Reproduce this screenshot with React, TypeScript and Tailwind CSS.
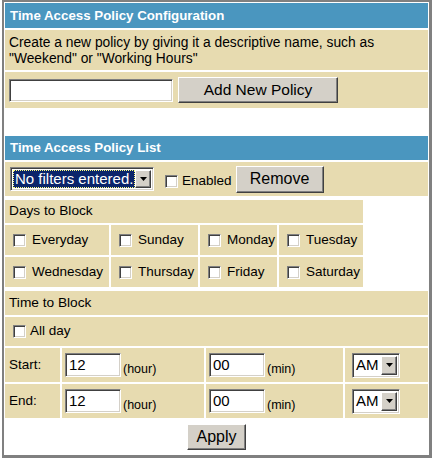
import * as React from "react";

const inset =
  "border border-t-[#808080] border-l-[#808080] border-r-white border-b-white shadow-[inset_1px_1px_0_#404040,inset_-1px_-1px_0_#d4d0c8]";
const raised =
  "border border-t-white border-l-white border-r-[#404040] border-b-[#404040] shadow-[inset_-1px_-1px_0_#808080] bg-[#d4d0c8]";

function Checkbox() {
  return <span className={`inline-block h-[13px] w-[13px] shrink-0 bg-white ${inset}`} />;
}

function Arrow() {
  return (
    <span className={`flex h-full w-[16px] shrink-0 items-center justify-center ${raised}`}>
      <svg width="7" height="4" viewBox="0 0 7 4">
        <path d="M0 0h7L3.5 4z" fill="#000" />
      </svg>
    </span>
  );
}

function DayCell({ label }: { label: string }) {
  return (
    <div className="flex items-center gap-[6px] bg-[#e7dbb0] pl-[8px] text-[13.5px]">
      <Checkbox />
      <span>{label}</span>
    </div>
  );
}

function TimeRow({ label }: { label: string }) {
  return (
    <div className="mt-[2px] grid h-[34px] grid-cols-[55px_142px_137px_1fr] gap-x-[2px]">
      <div className="flex items-center bg-[#e7dbb0] pl-[4px] text-[13.5px]">{label}</div>
      <div className="flex items-center bg-[#e7dbb0] pl-[3px]">
        <span className={`flex h-[24px] w-[56px] items-center bg-white pl-[3px] text-[15px] ${inset}`}>12</span>
        <span className="ml-[2px] mt-[8px] text-[12.5px]">(hour)</span>
      </div>
      <div className="flex items-center bg-[#e7dbb0] pl-[3px]">
        <span className={`flex h-[24px] w-[56px] items-center bg-white pl-[3px] text-[15px] ${inset}`}>00</span>
        <span className="ml-[2px] mt-[8px] text-[12.5px]">(min)</span>
      </div>
      <div className="flex items-center bg-[#e7dbb0] pl-[7px]">
        <span className={`flex h-[25px] w-[48px] items-center justify-between bg-white py-[2px] pl-[3px] pr-[2px] text-[15px] ${inset}`}>
          AM
          <Arrow />
        </span>
      </div>
    </div>
  );
}

export default function App() {
  return (
    <div className="h-[458px] w-[432px] bg-white pl-[2px] font-['Liberation_Sans',Arial,sans-serif] text-[14px] text-black">
      <div className="h-[458px] w-[430px] border-b-[3px] border-l-2 border-r-[3px] border-t-2 border-[#808080] px-px pt-px">
        {/* Configuration */}
        <div className="flex h-[25px] items-center bg-[#4a96bf] pl-[5px] text-[13.3px] font-bold text-white">
          Time Access Policy Configuration
        </div>
        <div className="mt-[2px] h-[40px] bg-[#e7dbb0] px-[4px] pt-[5px] text-[13.8px] leading-[16px]">
          Create a new policy by giving it a descriptive name, such as
          <br />
          "Weekend" or "Working Hours"
        </div>
        <div className="mt-[2px] flex h-[36px] items-center gap-[5px] bg-[#e7dbb0] pl-[4px]">
          <span className={`h-[23px] w-[164px] bg-white ${inset}`} />
          <button className={`h-[26px] w-[160px] text-[15.5px] ${raised}`}>Add New Policy</button>
        </div>

        {/* List */}
        <div className="mt-[28px] flex h-[24px] items-center bg-[#4a96bf] pl-[5px] text-[13.3px] font-bold text-white">
          Time Access Policy List
        </div>
        <div className="mt-[2px] flex h-[34px] items-center bg-[#e7dbb0] pl-[5px]">
          <span className={`flex h-[24px] w-[144px] items-center bg-white p-[2px] ${inset}`}>
            <span className="flex h-full flex-1 items-center overflow-hidden whitespace-nowrap border border-dotted border-[#ffff80] bg-[#0a246a] pl-px text-[15px] text-white">
              No filters entered.
            </span>
            <Arrow />
          </span>
          <span className="ml-[11px] mt-[4px] flex items-center gap-[4px] text-[13.5px]">
            <Checkbox />
            <span>Enabled</span>
          </span>
          <button className={`ml-[4px] h-[27px] w-[88px] text-[16px] ${raised}`}>Remove</button>
        </div>

        {/* Days */}
        <div className="mt-[4px] flex h-[23px] w-[358px] items-center bg-[#e7dbb0] pl-[4px] text-[13.7px]">
          Days to Block
        </div>
        <div className="mt-[2px] grid w-[358px] grid-cols-[104px_87px_77px_84px] grid-rows-[30px_30px] gap-[2px]">
          <DayCell label="Everyday" />
          <DayCell label="Sunday" />
          <DayCell label="Monday" />
          <DayCell label="Tuesday" />
          <DayCell label="Wednesday" />
          <DayCell label="Thursday" />
          <DayCell label="Friday" />
          <DayCell label="Saturday" />
        </div>

        {/* Time */}
        <div className="mt-[4px] flex h-[24px] items-center bg-[#e7dbb0] pl-[4px] text-[13.7px]">Time to Block</div>
        <div className="mt-[2px] flex h-[29px] items-center gap-[4px] bg-[#e7dbb0] pl-[8px] text-[13.5px]">
          <Checkbox />
          <span>All day</span>
        </div>
        <TimeRow label="Start:" />
        <TimeRow label="End:" />

        <div className="mt-[6px] flex justify-center">
          <button className={`h-[26px] w-[59px] text-[16px] ${raised}`}>Apply</button>
        </div>
      </div>
    </div>
  );
}
